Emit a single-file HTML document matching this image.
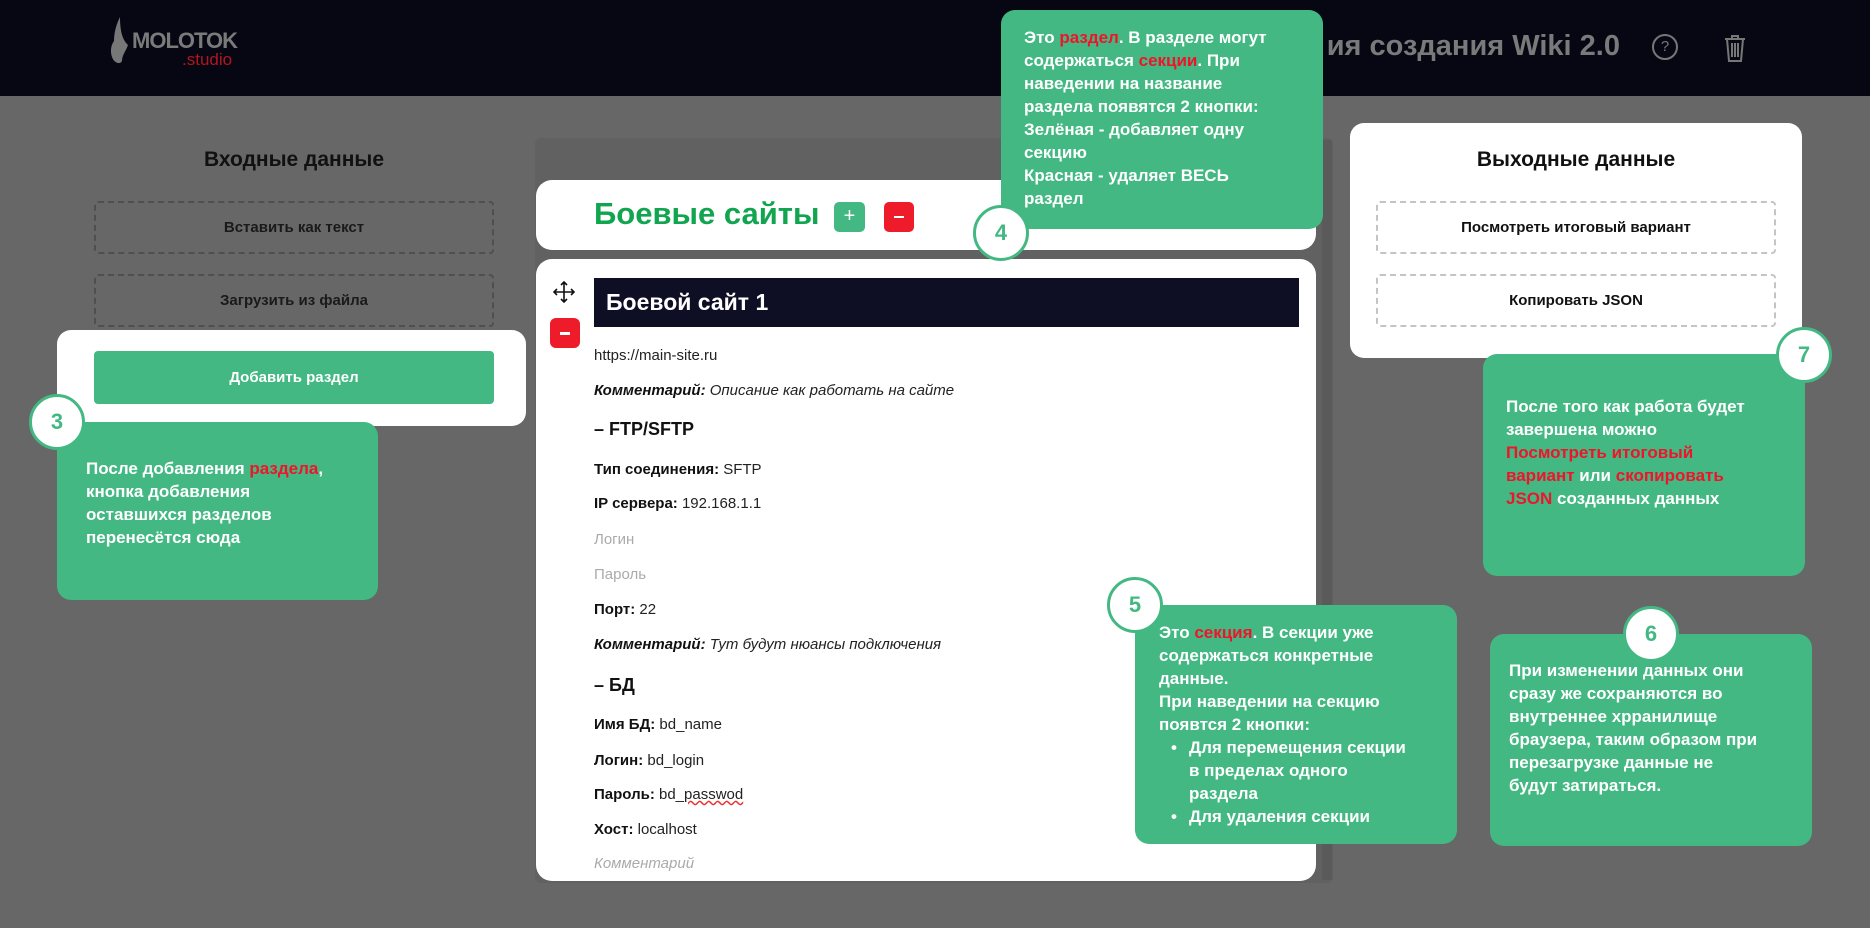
<!DOCTYPE html>
<html><head><meta charset="utf-8"><style>
*{box-sizing:border-box;margin:0;padding:0}
body{width:1870px;height:928px;background:#676767;font-family:"Liberation Sans",Arial,sans-serif;position:relative;overflow:hidden}
.abs{position:absolute}
.hdr{left:0;top:0;width:1870px;height:96px;background:#070714}
.dash{position:absolute;border:2px dashed #4f4f4f;border-radius:4px;display:flex;align-items:center;justify-content:center;font-size:15px;font-weight:bold;color:#1a1a1a}
.dashw{border-color:#c4c4c4;color:#111}
.tip{position:absolute;background:#43b883;border-radius:14px;color:#fff;font-weight:bold;font-size:17px;line-height:23px;white-space:nowrap}
.r{color:#f0142a}
.circ{position:absolute;width:56px;height:56px;border-radius:50%;background:#fff;border:3px solid #43b883;color:#43b883;font-weight:bold;font-size:22px;display:flex;align-items:center;justify-content:center}
.ln{position:absolute;left:594px;font-size:15px;color:#222;white-space:nowrap}
.ln b{color:#111}
.ph{color:#aaa}
.h4{font-size:18px;font-weight:bold;color:#111}
</style></head><body>
<div class="abs hdr"></div>
<svg class="abs" style="left:108px;top:15px" width="24" height="52" viewBox="0 0 24 52"><path d="M12 2 C8 10 6 18 6 26 C3 30 2 36 4 42 C6 48 12 50 14 46 C14 40 18 36 20 30 C16 26 12 20 12 2Z" fill="#777"/></svg>
<div class="abs" style="left:132px;top:28px;font-size:22px;font-weight:bold;color:#7a7a7a;letter-spacing:-1px">MOLOTOK</div>
<div class="abs" style="left:182px;top:50px;font-size:17px;color:#b01620">.studio</div>
<div class="abs" style="left:1310px;top:30px;width:310px;text-align:right;font-size:29px;font-weight:bold;color:#7a7a7a;white-space:nowrap;overflow:hidden">ия создания Wiki 2.0</div>
<div class="abs" style="left:1652px;top:34px;width:26px;height:26px;border:2px solid #777;border-radius:50%;color:#777;font-size:15px;text-align:center;line-height:22px">?</div>
<svg class="abs" style="left:1723px;top:33px" width="24" height="30" viewBox="0 0 24 30" fill="none" stroke="#777" stroke-width="2"><path d="M2 6h20M9 6V3h6v3M4 6l2 22h12l2-22M9 10v14M12 10v14M15 10v14"/></svg>

<div class="abs" style="left:94px;top:148px;width:400px;text-align:center;font-size:21px;font-weight:bold;color:#111">Входные данные</div>
<div class="dash" style="left:94px;top:201px;width:400px;height:53px">Вставить как текст</div>
<div class="dash" style="left:94px;top:274px;width:400px;height:53px">Загрузить из файла</div>
<div class="abs" style="left:57px;top:330px;width:469px;height:96px;background:#fff;border-radius:14px"></div>
<div class="abs" style="left:94px;top:351px;width:400px;height:53px;background:#43b883;border-radius:4px;color:#fff;font-weight:bold;font-size:15px;display:flex;align-items:center;justify-content:center">Добавить раздел</div>

<div class="abs" style="left:535px;top:138px;width:798px;height:745px;background:#616161;border-radius:6px"></div>
<div class="abs" style="left:1322px;top:140px;width:10px;height:740px;background:#5a5a5a"></div>
<div class="abs" style="left:536px;top:180px;width:780px;height:70px;background:#fff;border-radius:16px"></div>
<div class="abs" style="left:594px;top:196px;font-size:31px;font-weight:bold;color:#12a550">Боевые сайты</div>
<div class="abs" style="left:834px;top:202px;width:31px;height:30px;background:#43b883;border-radius:5px;color:#fff;font-size:20px;text-align:center;line-height:29px">+</div>
<div class="abs" style="left:884px;top:202px;width:30px;height:30px;background:#ee1b2a;border-radius:5px"><div style="position:absolute;left:10px;top:14px;width:10px;height:2px;background:#fff"></div></div>

<div class="abs" style="left:536px;top:259px;width:780px;height:622px;background:#fff;border-radius:16px"></div>
<svg class="abs" style="left:553px;top:281px" width="22" height="22" viewBox="0 0 22 22" fill="none" stroke="#111" stroke-width="1.6"><path d="M11 1v20M1 11h20M8 4l3-3 3 3M8 18l3 3 3-3M4 8l-3 3 3 3M18 8l3 3-3 3"/></svg>
<div class="abs" style="left:550px;top:318px;width:30px;height:30px;background:#ee1b2a;border-radius:6px"><div style="position:absolute;left:10px;top:14px;width:10px;height:2.5px;background:#fff"></div></div>
<div class="abs" style="left:594px;top:278px;width:705px;height:49px;background:#0e0f24;color:#fff;font-size:23px;font-weight:bold;padding-left:12px;line-height:49px">Боевой сайт 1</div>
<div class="ln" style="top:347px">https://main-site.ru</div>
<div class="ln" style="top:382px;font-style:italic"><b>Комментарий:</b> Описание как работать на сайте</div>
<div class="ln h4" style="top:419px">– FTP/SFTP</div>
<div class="ln" style="top:461px"><b>Тип соединения:</b> SFTP</div>
<div class="ln" style="top:495px"><b>IP сервера:</b> 192.168.1.1</div>
<div class="ln ph" style="top:531px">Логин</div>
<div class="ln ph" style="top:566px">Пароль</div>
<div class="ln" style="top:601px"><b>Порт:</b> 22</div>
<div class="ln" style="top:636px;font-style:italic"><b>Комментарий:</b> Тут будут нюансы подключения</div>
<div class="ln h4" style="top:675px">– БД</div>
<div class="ln" style="top:716px"><b>Имя БД:</b> bd_name</div>
<div class="ln" style="top:752px"><b>Логин:</b> bd_login</div>
<div class="ln" style="top:786px"><b>Пароль:</b> bd_<span style="text-decoration:underline wavy #e33">passwod</span></div>
<div class="ln" style="top:821px"><b>Хост:</b> localhost</div>
<div class="ln ph" style="top:855px;font-style:italic">Комментарий</div>

<div class="abs" style="left:1350px;top:123px;width:452px;height:235px;background:#fff;border-radius:14px"></div>
<div class="abs" style="left:1376px;top:148px;width:400px;text-align:center;font-size:21px;font-weight:bold;color:#111">Выходные данные</div>
<div class="dash dashw" style="left:1376px;top:201px;width:400px;height:53px">Посмотреть итоговый вариант</div>
<div class="dash dashw" style="left:1376px;top:274px;width:400px;height:53px">Копировать JSON</div>

<div class="tip" style="left:57px;top:422px;width:321px;height:178px;padding:35px 0 0 29px">После добавления <span class="r">раздела</span>,<br>кнопка добавления<br>оставшихся разделов<br>перенесётся сюда</div>
<div class="circ" style="left:29px;top:394px">3</div>

<div class="tip" style="left:1001px;top:10px;width:322px;height:219px;padding:16px 0 0 23px">Это <span class="r">раздел</span>. В разделе могут<br>содержаться <span class="r">секции</span>. При<br>наведении на название<br>раздела появятся 2 кнопки:<br>Зелёная - добавляет одну<br>секцию<br>Красная - удаляет ВЕСЬ<br>раздел</div>
<div class="circ" style="left:973px;top:205px">4</div>

<div class="tip" style="left:1483px;top:354px;width:322px;height:222px;padding:41px 0 0 23px">После того как работа будет<br>завершена можно<br><span class="r">Посмотреть итоговый<br>вариант</span> или <span class="r">скопировать<br>JSON</span> созданных данных</div>
<div class="circ" style="left:1776px;top:327px">7</div>

<div class="tip" style="left:1135px;top:605px;width:322px;height:239px;padding:16px 0 0 24px">Это <span class="r">секция</span>. В секции уже<br>содержаться конкретные<br>данные.<br>При наведении на секцию<br>появтся 2 кнопки:<br><span style="display:inline-block;width:30px;text-align:center">•</span>Для перемещения секции<br><span style="display:inline-block;width:30px"></span>в пределах одного<br><span style="display:inline-block;width:30px"></span>раздела<br><span style="display:inline-block;width:30px;text-align:center">•</span>Для удаления секции</div>
<div class="circ" style="left:1107px;top:577px">5</div>

<div class="tip" style="left:1490px;top:634px;width:322px;height:212px;padding:25px 0 0 19px">При изменении данных они<br>сразу же сохраняются во<br>внутреннее хрранилище<br>браузера, таким образом при<br>перезагрузке данные не<br>будут затираться.</div>
<div class="circ" style="left:1623px;top:606px">6</div>
</body></html>
